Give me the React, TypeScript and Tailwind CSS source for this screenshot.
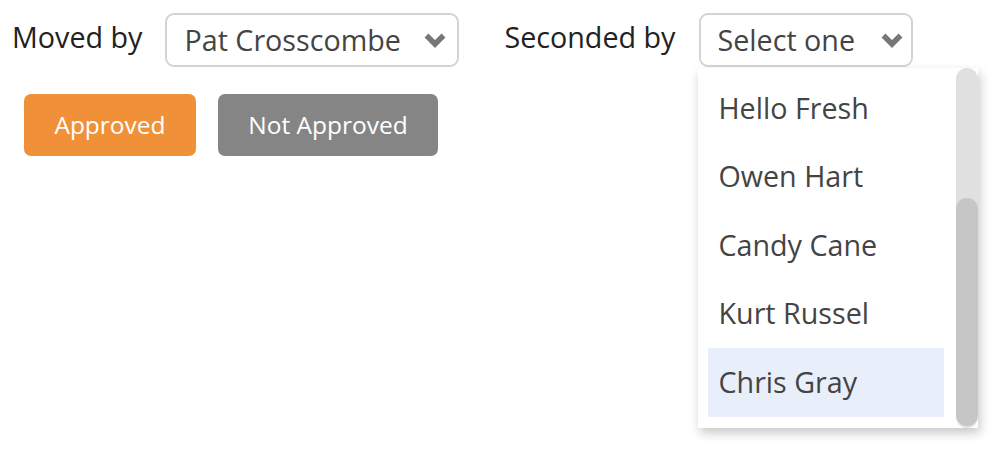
import React from "react";

function Chevron() {
  return (
    <svg width="24" height="16" viewBox="0 0 24 16" fill="none" className="shrink-0">
      <path d="M3.5 3.5L12 12L20.5 3.5" stroke="#777777" strokeWidth="5.5" strokeLinejoin="miter" />
    </svg>
  );
}

const options = ["Hello Fresh", "Owen Hart", "Candy Cane", "Kurt Russel", "Chris Gray"];

export default function App() {
  return (
    <div className="w-[998px] h-[454px] bg-white relative font-['Open_Sans',sans-serif]">
      {/* Row of selects */}
      <div className="flex items-center pt-[13px] pl-[12px]">
        <span className="text-[28.7px] text-[#222] leading-none -mt-[6px]">Moved by</span>
        <div className="ml-[23px] w-[294px] h-[54px] border-2 border-[#d4d4d4] rounded-[9px] flex items-center justify-between pl-[17px] pr-[10px]">
          <span className="text-[28.7px] text-[#444] leading-none">Pat Crosscombe</span>
          <Chevron />
        </div>
        <span className="ml-[45px] text-[28.7px] text-[#222] leading-none -mt-[6px]">Seconded by</span>
        <div className="relative ml-[24px]">
          <div className="w-[214px] h-[54px] border-2 border-[#d4d4d4] rounded-[9px] flex items-center justify-between pl-[16px] pr-[7px]">
            <span className="text-[28.7px] text-[#444] leading-none">Select one</span>
            <Chevron />
          </div>
          {/* Open dropdown list */}
          <div className="absolute left-[-1px] top-[55px] w-[280px] h-[360px] bg-white shadow-[2px_5px_10px_rgba(0,0,0,0.22)] flex">
            <div className="flex-1 flex flex-col pl-[10px] pr-[12px] pt-[6px]">
              {options.map((o, i) => (
                <div
                  key={o}
                  className={`h-[68.5px] flex items-center pl-[10px] text-[28.7px] text-[#444] leading-none ${
                    i === 4 ? "bg-[#e8effb]" : ""
                  }`}
                >
                  {o}
                </div>
              ))}
            </div>
            <div className="w-[22px] h-full bg-[#e0e0e0] rounded-[11px] flex flex-col justify-end">
              <div className="h-[228px] bg-[#c6c6c6] rounded-[11px] mb-[2px]" />
            </div>
          </div>
        </div>
      </div>

      {/* Buttons */}
      <div className="flex gap-[22px] pl-[24px] mt-[27px]">
        <button className="w-[172px] h-[62px] rounded-[7px] bg-[#f0913a] text-white text-[24.5px] leading-none">
          Approved
        </button>
        <button className="w-[220px] h-[62px] rounded-[7px] bg-[#858585] text-white text-[24.5px] leading-none">
          Not Approved
        </button>
      </div>
    </div>
  );
}
